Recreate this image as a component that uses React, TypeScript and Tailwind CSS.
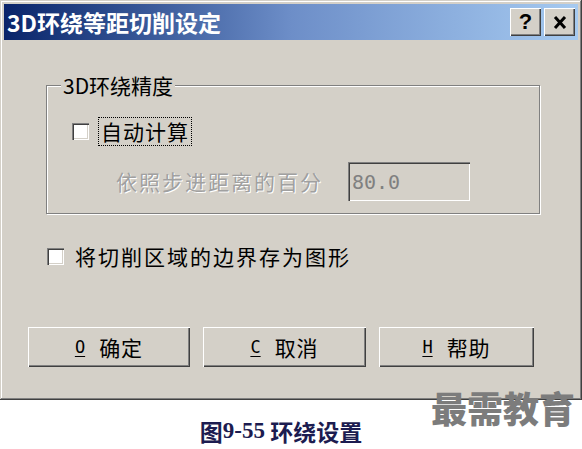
const cjk = "font-['Noto_Sans_CJK_SC','Noto_Sans',sans-serif]";

function Checkbox() {
  return (
    <span className="block h-[17px] w-[17px] shrink-0 bg-white shadow-[inset_1px_1px_0_#808080,inset_2px_2px_0_#404040,inset_-1px_-1px_0_#ffffff,inset_-2px_-2px_0_#d4d0c8]" />
  );
}

function Button({ hotkey, label, width }: { hotkey: string; label: string; width: string }) {
  return (
    <button
      className={`${width} flex h-[40px] items-center justify-center gap-[14px] bg-[#d4d0c8] text-[21px] leading-none text-black shadow-[inset_1px_1px_0_#ffffff,inset_-1px_-1px_0_#404040,inset_-2px_-2px_0_#808080]`}
    >
      <span className="font-['DejaVu_Sans_Mono',monospace] text-[17px] underline underline-offset-[3px]">{hotkey}</span>
      <span className="tracking-[1px]">{label}</span>
    </button>
  );
}

export default function App() {
  return (
    <div className={`relative h-[449px] w-[582px] overflow-hidden bg-white ${cjk}`}>
      <div className="flex h-[400px] w-[582px] flex-col bg-[#d4d0c8] p-[4px] shadow-[inset_-1px_-1px_0_#404040,inset_1px_1px_0_#d4d0c8,inset_-2px_-2px_0_#808080,inset_2px_2px_0_#ffffff]">
        {/* title bar */}
        <div className="flex h-[36px] items-center justify-between bg-gradient-to-r from-[#0a246a] via-[#6d8ec8] to-[#a6caf0] pl-[3px] pr-[3px]">
          <span className="text-[23px] font-bold leading-none text-white">3D环绕等距切削设定</span>
          <div className="flex gap-[3px]">
            <span className="flex h-[28px] w-[31px] items-center justify-center bg-[#d4d0c8] font-['Liberation_Sans',sans-serif] text-[22px] font-bold leading-none text-black shadow-[inset_1px_1px_0_#ffffff,inset_-1px_-1px_0_#404040,inset_-2px_-2px_0_#808080]">
              ?
            </span>
            <span className="flex h-[28px] w-[31px] items-center justify-center bg-[#d4d0c8] text-black shadow-[inset_1px_1px_0_#ffffff,inset_-1px_-1px_0_#404040,inset_-2px_-2px_0_#808080]">
              <svg width="14" height="13" viewBox="0 0 14 13">
                <path d="M2 1 L12 12 M12 1 L2 12" stroke="black" strokeWidth="3" />
              </svg>
            </span>
          </div>
        </div>

        {/* group box */}
        <fieldset className="ml-[42px] mt-[33px] w-[494px] border border-[#808080] pb-[12px] shadow-[1px_1px_0_#ffffff,inset_1px_1px_0_#ffffff]">
          <legend className="ml-[14px] bg-[#d4d0c8] px-[2px] text-[21px] leading-[24px] text-black">3D环绕精度</legend>
          <div className="ml-[25px] mt-[20px] flex h-[29px] items-center gap-[9px]">
            <Checkbox />
            <span className="border border-dotted border-black px-[2px] text-[21px] leading-[27px] tracking-[1px] text-black">自动计算</span>
          </div>
          <div className="ml-[25px] mt-[16px] flex items-center">
            <span className="ml-[44px] w-[232px] text-[21px] leading-none tracking-[2px] text-[#a0a0a0] [text-shadow:1px_1px_0_#ffffff]">依照步进距离的百分</span>
            <div className="flex h-[39px] w-[122px] items-center bg-[#d4d0c8] pl-[4px] font-['DejaVu_Sans_Mono',monospace] text-[20px] text-[#808080] shadow-[inset_1px_1px_0_#808080,inset_2px_2px_0_#404040,inset_-1px_-1px_0_#ffffff,inset_-2px_-2px_0_#d4d0c8]">
              80.0
            </div>
          </div>
        </fieldset>

        <div className="ml-[43px] mt-[28px] flex h-[29px] items-center gap-[11px]">
          <Checkbox />
          <span className="text-[21px] leading-none tracking-[2px] text-black">将切削区域的边界存为图形</span>
        </div>

        <div className="ml-[24px] mt-[56px] flex gap-[13px]">
          <Button hotkey="O" label="确定" width="w-[162px]" />
          <Button hotkey="C" label="取消" width="w-[163px]" />
          <Button hotkey="H" label="帮助" width="w-[155px]" />
        </div>
      </div>

      {/* watermark */}
      <div className="absolute left-[431px] top-[389px] text-[36px] font-black leading-none text-[#7c7c7c]">最需教育</div>

      <div className="mt-[18px] flex justify-center pr-[20px] text-[23px] font-bold leading-[26px] text-[#1c1c50]">
        图<span className="font-['Liberation_Serif',serif]">9-55</span>&nbsp;环绕设置
      </div>
    </div>
  );
}
